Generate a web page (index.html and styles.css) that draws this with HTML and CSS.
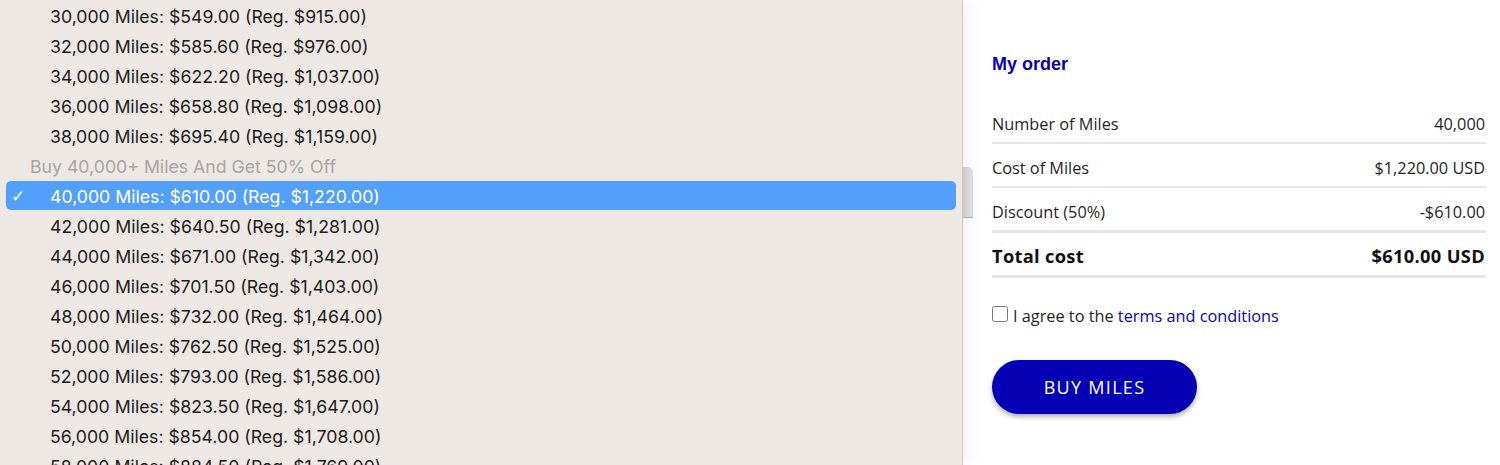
FILE: index.html
```html
<!DOCTYPE html>
<html lang="en">
<head>
<meta charset="utf-8">
<title>Buy Miles</title>
<link rel="stylesheet" href="styles.css">
</head>
<body>
<div class="page">
  <ul class="menu">
    <li class="opt">30,000 Miles: $549.00 (Reg. $915.00)</li>
    <li class="opt">32,000 Miles: $585.60 (Reg. $976.00)</li>
    <li class="opt">34,000 Miles: $622.20 (Reg. $1,037.00)</li>
    <li class="opt">36,000 Miles: $658.80 (Reg. $1,098.00)</li>
    <li class="opt">38,000 Miles: $695.40 (Reg. $1,159.00)</li>
    <li class="group">Buy 40,000+ Miles And Get 50% Off</li>
    <li class="opt selected"><span class="check">&#10003;</span>40,000 Miles: $610.00 (Reg. $1,220.00)</li>
    <li class="opt">42,000 Miles: $640.50 (Reg. $1,281.00)</li>
    <li class="opt">44,000 Miles: $671.00 (Reg. $1,342.00)</li>
    <li class="opt">46,000 Miles: $701.50 (Reg. $1,403.00)</li>
    <li class="opt">48,000 Miles: $732.00 (Reg. $1,464.00)</li>
    <li class="opt">50,000 Miles: $762.50 (Reg. $1,525.00)</li>
    <li class="opt">52,000 Miles: $793.00 (Reg. $1,586.00)</li>
    <li class="opt">54,000 Miles: $823.50 (Reg. $1,647.00)</li>
    <li class="opt">56,000 Miles: $854.00 (Reg. $1,708.00)</li>
    <li class="opt">58,000 Miles: $884.50 (Reg. $1,769.00)</li>
  </ul>
  <main class="order">
    <div class="select-peek"></div>
    <h2 class="order-title">My order</h2>
    <div class="summary">
      <div class="row"><span>Number of Miles</span><span>40,000</span></div>
      <div class="row"><span>Cost of Miles</span><span>$1,220.00 USD</span></div>
      <div class="row thick"><span>Discount (50%)</span><span>-$610.00</span></div>
      <div class="row thick total"><span>Total cost</span><span>$610.00 USD</span></div>
    </div>
    <label class="agree"><input type="checkbox" class="box"><span>I agree to the <a href="#" class="link">terms and conditions</a></span></label>
    <button class="buy" type="button">BUY MILES</button>
  </main>
</div>
</body>
</html>
```
FILE: styles.css
```css
* { box-sizing: border-box; }
html, body { margin: 0; padding: 0; }
body {
  width: 1500px;
  height: 465px;
  overflow: hidden;
  background: #ffffff;
}
.page {
  display: flex;
  height: 465px;
}
.menu {
  list-style: none;
  margin: 0;
  padding: 1px 6px 0 6px;
  width: 963px;
  flex: 0 0 963px;
  height: 465px;
  overflow: hidden;
  background: #ede8e4;
  border-right: 1px solid #cbc7c3;
  box-shadow: 2px 0 18px rgba(0, 0, 0, 0.07);
  position: relative;
  z-index: 2;
  font-family: Inter, "Noto Sans", sans-serif;
  font-size: 17.7px;
  color: #1c1c1c;
}
.opt, .group {
  height: 29px;
  margin-bottom: 1px;
  line-height: 31px;
  white-space: nowrap;
  border-radius: 5px;
  position: relative;
}
.opt { padding-left: 44px; }
.group { padding-left: 24px; color: #a8a4a1; }
.selected {
  background: #539ffc;
  color: #ffffff;
}
.check {
  position: absolute;
  left: 5px;
  top: 0;
  font-size: 17px;
  font-weight: 700;
  font-family: "DejaVu Sans", sans-serif;
}
.order {
  flex: 1;
  position: relative;
  padding: 53px 14px 0 29px;
  font-family: "Open Sans", sans-serif;
  font-size: 16.3px;
  color: #1f1f1f;
}
.select-peek {
  position: absolute;
  left: 0;
  top: 167px;
  width: 10px;
  height: 51px;
  background: linear-gradient(to right, #d4d4d4, #e4e4e4);
  border-radius: 0 5px 0 0;
  border-bottom: 1px solid #9db0d6;
}
.order-title {
  margin: 0 0 25px 0;
  font-family: "Liberation Sans", Arial, sans-serif;
  font-weight: 700;
  font-size: 18px;
  line-height: 22px;
  color: #0a00b8;
}
.summary { display: flex; flex-direction: column; }
.row {
  display: flex;
  justify-content: space-between;
  padding: 14px 1px 8px 0;
  line-height: 20px;
  border-bottom: 2px solid #e6e6e6;
}
.row.thick { border-bottom-width: 3px; }
.total {
  font-weight: 700;
  font-size: 18.3px;
  letter-spacing: 0.3px;
  padding-top: 13px;
  padding-bottom: 9px;
  color: #111;
}
.agree {
  display: flex;
  align-items: center;
  gap: 5px;
  margin-top: 27px;
  height: 22px;
}
.box {
  margin: 0;
  width: 16px;
  height: 16px;
  position: relative;
  top: -2px;
}
.link { color: #0a00c4; text-decoration: none; }
.buy {
  display: block;
  margin-top: 33px;
  width: 205px;
  height: 54px;
  border: none;
  border-radius: 27px;
  background: #0500b6;
  color: #ffffff;
  font-family: "Open Sans", sans-serif;
  font-size: 18px;
  letter-spacing: 1.3px;
  box-shadow: 0 3px 5px rgba(0, 0, 0, 0.3);
}
```
